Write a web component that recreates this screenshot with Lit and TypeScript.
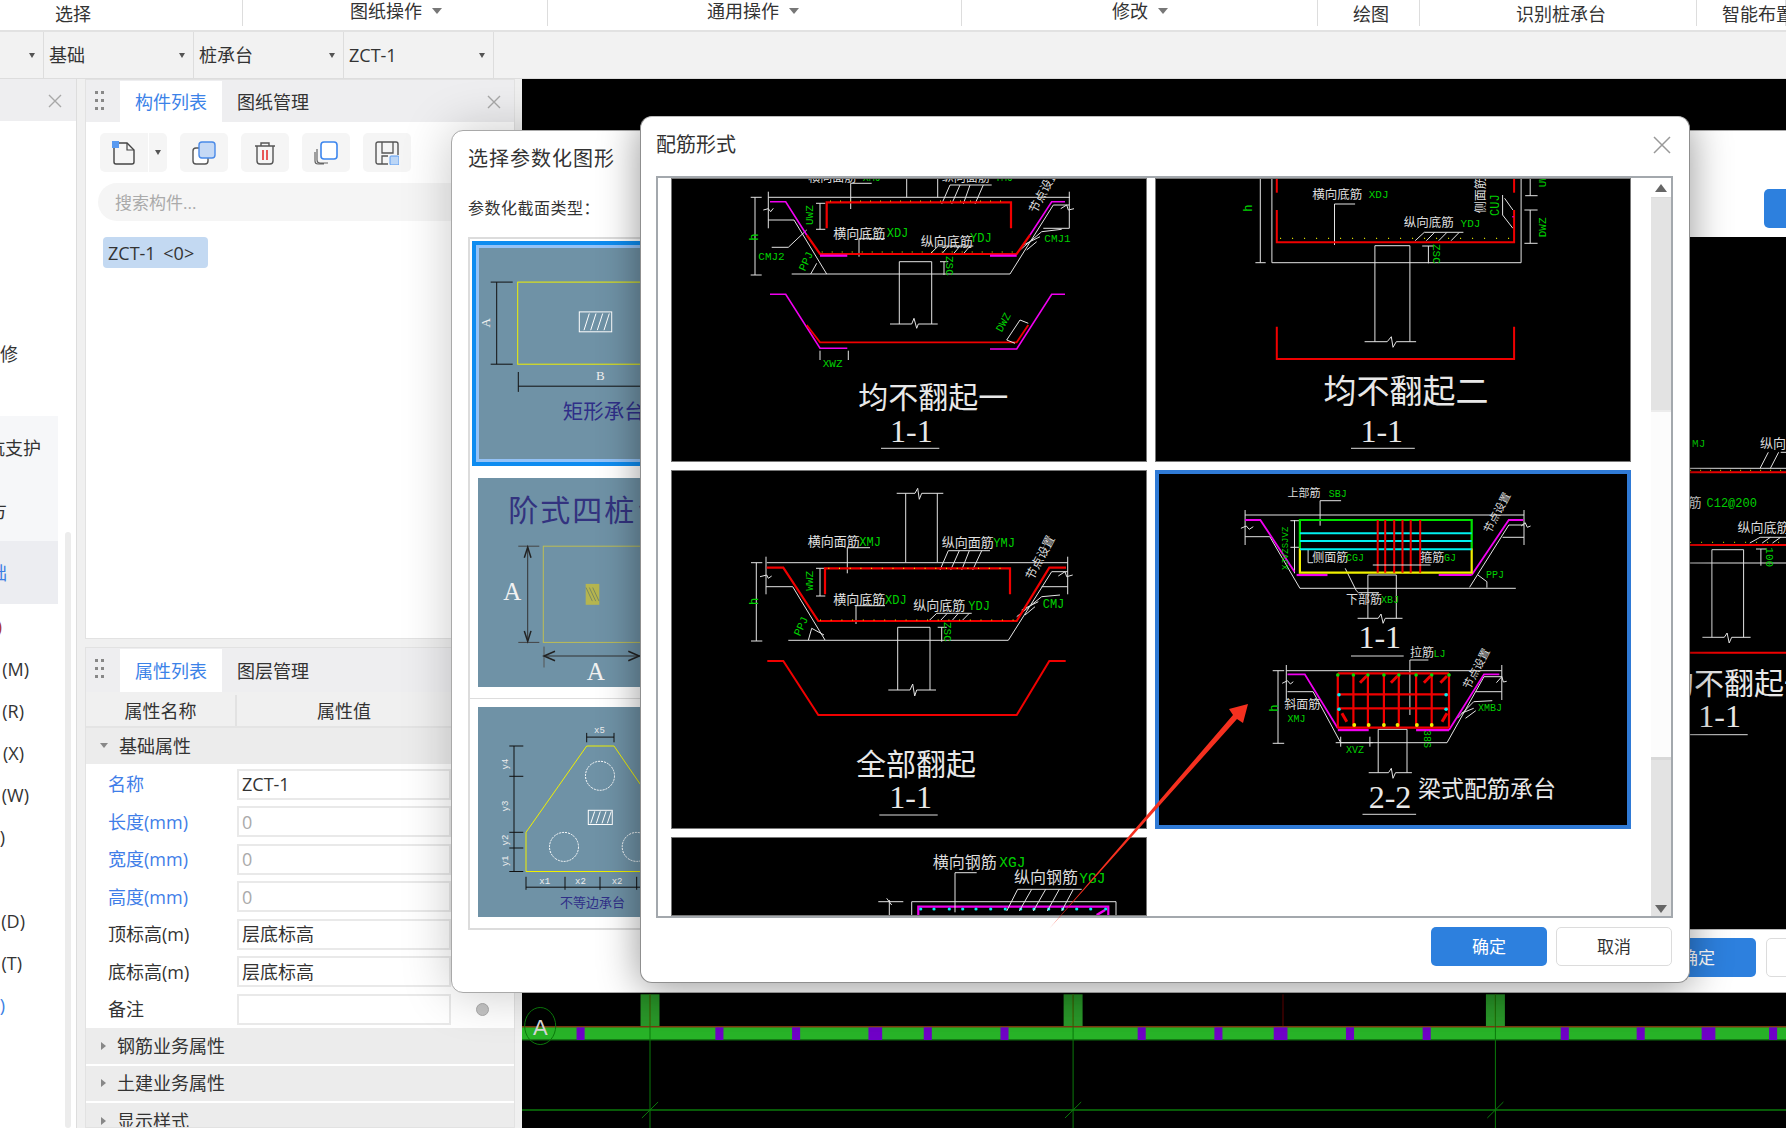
import { LitElement, html, css, svg } from "lit";
import { customElement } from "lit/decorators.js";

const mk = (ox: number, oy: number, sx: number, sy: number) => {
  const X = (v: number) => +(ox + v / sx).toFixed(1);
  const Y = (v: number) => +(oy + v / sy).toFixed(1);
  const pts = (p: number[]) => p.map((v, i) => (i % 2 ? Y(v) : X(v))).join(" ");
  return {
    l: (p: number[], c = "#e4e4e4", w = 1, dash = "") =>
      svg`<polyline points=${pts(p)} fill="none" stroke=${c} stroke-width=${w} stroke-dasharray=${dash}></polyline>`,
    t: (x: number, y: number, s: string, c = "#e0e0e0", size = 13, cls = "cj", rot = 0) =>
      svg`<text x=${X(x)} y=${Y(y)} fill=${c} font-size=${size} class=${cls} transform=${`rotate(${rot} ${X(x)} ${Y(y)})`}>${s}</text>`,
    g: (x: number, y: number, s: string, size = 11.5, rot = 0) =>
      svg`<text x=${X(x)} y=${Y(y)} fill="#00d000" font-size=${size} class="mn" transform=${`rotate(${rot} ${X(x)} ${Y(y)})`}>${s}</text>`,
    c: (x: number, y: number, r: number, f: string) => svg`<circle cx=${X(x)} cy=${Y(y)} r=${r} fill=${f}></circle>`,
    e: (x: number, y: number, r: number, ry: number, st: string, dash = "") =>
      svg`<ellipse cx=${X(x)} cy=${Y(y)} rx=${r} ry=${ry} fill="none" stroke=${st} stroke-dasharray=${dash}></ellipse>`,
    r: (x: number, y: number, x2: number, y2: number, st: string, f = "none", w = 1) =>
      svg`<rect x=${X(x)} y=${Y(y)} width=${X(x2) - X(x)} height=${Y(y2) - Y(y)} fill=${f} stroke=${st} stroke-width=${w}></rect>`,
  };
};
const RED = "#f00000";
const MG = "#f000f0";
const YL = "#f0f000";

function cell1() {
  const { l, t, g } = mk(640, 110, 3, 3);
  return svg`
    ${l([385, 262, 1290, 262])}${l([385, 245, 385, 355])}${l([1288, 245, 1288, 355])}
    ${l([370, 300, 385, 296, 392, 305, 400, 295])}${l([1262, 296, 1280, 285, 1285, 300, 1302, 296])}
    ${l([385, 330, 462, 330, 560, 492])}${l([455, 492, 1110, 492, 1240, 285, 1288, 285])}${l([1210, 355, 1288, 355])}
    ${l([800, 197, 800, 262])}${l([893, 197, 893, 262])}
    ${l([875, 642, 875, 455, 778, 455, 778, 642])}${l([750, 642, 815, 642, 822, 625, 830, 655, 835, 642, 893, 642])}
    ${l([345, 262, 345, 495])}${l([332, 262, 365, 262])}${l([332, 495, 365, 495])}
    ${l([540, 280, 540, 358])}${l([528, 280, 556, 280])}${l([528, 358, 556, 358])}
    ${l([512, 492, 530, 460])}${l([912, 455, 912, 495])}${l([900, 455, 925, 455])}
    ${l([632, 297, 632, 220, 695, 220])}${l([657, 440, 657, 386, 735, 386])}
    ${l([905, 282, 930, 225, 1055, 225])}${l([935, 282, 960, 225])}${l([970, 282, 990, 225])}${l([1005, 282, 1030, 225])}
    ${l([870, 432, 895, 408, 1000, 408])}${l([905, 432, 925, 408])}${l([940, 432, 960, 408])}${l([970, 432, 990, 408])}
    ${l([395, 412, 445, 412, 500, 360])}
    ${l([1140, 420, 1205, 365, 1265, 358])}${l([1150, 405, 1200, 380])}${l([1160, 420, 1190, 395])}
    ${l([560, 355, 560, 277, 1113, 277, 1113, 355], RED, 2.2)}
    ${l([500, 375, 540, 432, 1130, 432, 1170, 375], RED, 2.2)}
    ${l([570, 273, 1110, 273], YL, 1.2, "1 9")}${l([545, 426, 1130, 426], YL, 1.2, "1 9")}
    ${l([390, 275, 437, 275, 500, 375], MG, 1.6)}${l([540, 437, 622, 437], MG, 2.2)}${l([1050, 437, 1130, 437], MG, 2.2)}${l([1170, 375, 1235, 275, 1275, 275], MG, 1.6)}
    ${l([390, 553, 437, 553, 540, 715, 622, 715], MG, 1.6)}${l([1050, 717, 1130, 717, 1235, 553, 1275, 553], MG, 1.6)}
    ${l([500, 645, 540, 697, 1130, 697, 1165, 645], RED, 1.8)}
    ${l([540, 722, 540, 750])}${l([625, 722, 625, 750])}${l([1100, 690, 1140, 630])}${l([1140, 630, 1165, 640])}${l([1100, 690, 1125, 700])}
    ${t(505, 215, "横向面筋", "#ddd", 12)}${t(905, 215, "纵向面筋", "#ddd", 12)}${g(668, 213, "XMJ", 10)}${g(1065, 213, "YMJ", 10)}
    ${t(580, 383, "横向底筋")}${g(740, 381, "XDJ", 12)}${t(842, 407, "纵向底筋")}${g(990, 397, "YDJ", 12)}
    ${t(1188, 312, "节点设置", "#ddd", 12, "cj", -62)}
    ${g(518, 345, "UWZ", 11, -90)}${g(355, 392, "h", 12, -90)}${g(355, 450, "CMJ2", 11)}${g(1213, 397, "CMJ1", 11)}
    ${g(495, 485, "PPJ", 11, -65)}${g(918, 438, "ZSC", 11, 90)}${g(548, 772, "XWZ", 11)}${g(1085, 668, "DWZ", 11, -62)}
    ${t(655, 895, "均不翻起一", "#e8e8e8", 30)}
    ${t(750, 995, "1-1", "#e8e8e8", 32, "se")}${l([723, 1015, 898, 1015], "#ddd", 1)}
  `;
}

function cell2() {
  const { l, t, g, c } = mk(1140, 110, 2.427, 3);
  return svg`
    ${l([320, 197, 320, 458, 925, 458, 925, 197])}${l([292, 197, 292, 458])}${l([280, 458, 305, 458])}
    ${l([655, 695, 655, 407, 570, 407, 570, 695])}${l([545, 695, 600, 695, 610, 680, 614, 712, 622, 695, 670, 695])}
    ${l([472, 405, 472, 282, 522, 282])}
    ${l([668, 392, 690, 367, 785, 367])}${l([695, 392, 715, 367])}${l([725, 392, 745, 367])}${l([755, 392, 775, 367])}
    ${l([947, 300, 947, 400])}${l([933, 300, 965, 300])}${l([933, 400, 965, 400])}${l([947, 197, 947, 257])}${l([935, 257, 965, 257])}
    ${l([700, 408, 700, 460])}${l([685, 408, 712, 408])}
    ${l([880, 255, 880, 315, 905, 355])}${l([885, 265, 905, 300])}
    ${l([332, 197, 332, 248], RED, 2)}${l([908, 197, 908, 248], RED, 2)}
    ${l([332, 300, 332, 397, 908, 397, 908, 300], RED, 2)}
    ${l([340, 385, 905, 385], YL, 1.2, "1 11")}
    ${l([332, 650, 332, 747, 908, 747, 908, 650], RED, 2)}
    ${t(418, 267, "横向底筋", "#ddd", 12.5)}${g(555, 265, "XDJ", 11)}${t(640, 352, "纵向底筋", "#ddd", 12.5)}${g(778, 350, "YDJ", 11)}
    ${g(272, 305, "h", 12, -90)}${g(870, 318, "CUJ", 12, -90)}${t(838, 310, "侧面筋", "#ddd", 12, "cj", -90)}
    ${g(985, 232, "UW", 11, -90)}${g(985, 382, "DWZ", 11, -90)}${g(712, 402, "ZSC", 11, 90)}
    ${t(445, 880, "均不翻起二", "#e8e8e8", 33)}
    ${t(535, 995, "1-1", "#e8e8e8", 32, "se")}${l([512, 1015, 667, 1015], "#ddd", 1)}
    ${c(905, 320, 0.8, MG)}
  `;
}

function cell3() {
  const { l, t, g } = mk(640, 460, 3, 3);
  return svg`
    ${l([770, 100, 825, 100, 833, 85, 838, 118, 845, 100, 910, 100])}${l([797, 100, 797, 307])}${l([892, 100, 892, 307])}
    ${l([380, 308, 1283, 308])}${l([378, 290, 378, 403])}${l([1283, 290, 1283, 403])}
    ${l([360, 350, 380, 345, 385, 355, 395, 348])}${l([1255, 348, 1275, 335, 1280, 350, 1298, 345])}
    ${l([378, 380, 458, 380, 555, 540])}${l([445, 541, 1105, 541, 1235, 335, 1283, 335])}${l([1205, 380, 1283, 380])}
    ${l([349, 308, 349, 543])}${l([333, 308, 367, 308])}${l([333, 543, 367, 543])}
    ${l([540, 325, 540, 408])}${l([528, 325, 556, 325])}${l([528, 408, 556, 408])}
    ${l([505, 541, 515, 505, 552, 525])}
    ${l([870, 690, 870, 502, 773, 502, 773, 690])}${l([745, 690, 810, 690, 818, 672, 824, 708, 830, 690, 888, 690])}
    ${l([622, 340, 622, 263, 690, 263])}${l([648, 492, 648, 437, 735, 437])}
    ${l([900, 330, 925, 272, 1050, 272])}${l([932, 330, 958, 272])}${l([965, 330, 988, 272])}${l([998, 330, 1025, 272])}
    ${l([866, 483, 890, 460, 995, 460])}${l([900, 483, 922, 460])}${l([935, 483, 955, 460])}${l([965, 483, 988, 460])}
    ${l([905, 502, 905, 545])}${l([893, 502, 920, 502])}
    ${l([1130, 470, 1205, 410, 1260, 405])}${l([1145, 450, 1195, 425])}${l([1155, 465, 1185, 440])}
    ${l([555, 403, 555, 325, 1110, 325, 1110, 403], RED, 2.2)}
    ${l([380, 323, 430, 323, 535, 483, 1130, 483, 1228, 323, 1278, 323], RED, 2.2)}
    ${l([565, 325, 1105, 325], YL, 1.2, "1 9.7")}${l([540, 480, 1125, 480], YL, 1.2, "1 9.7")}
    ${l([382, 603, 430, 603, 535, 765, 1130, 765, 1228, 603, 1277, 603], RED, 2)}
    ${t(503, 258, "横向面筋")}${g(658, 257, "XMJ", 12)}${t(905, 262, "纵向面筋")}${g(1060, 260, "YMJ", 12)}
    ${t(580, 432, "横向底筋")}${g(735, 432, "XDJ", 12)}${t(820, 450, "纵向底筋")}${g(985, 450, "YDJ", 12)}
    ${t(1178, 362, "节点设置", "#ddd", 12, "cj", -62)}
    ${g(520, 392, "WWZ", 11, -90)}${g(355, 435, "h", 12, -90)}${g(1208, 445, "CMJ", 12)}
    ${g(480, 530, "PPJ", 11, -65)}${g(912, 486, "ZSC", 11, 90)}
    ${t(648, 945, "全部翻起", "#e8e8e8", 30)}
    ${t(748, 1045, "1-1", "#e8e8e8", 32, "se")}${l([718, 1065, 893, 1065], "#ddd", 1)}
  `;
}

function cell4() {
  const { l, t, g, c } = mk(1140, 460, 2.427, 3);
  const bars = [577, 595, 617, 637, 657, 680];
  const vs = [480, 518, 553, 592, 628, 670, 708, 750];
  return svg`
    ${l([255, 165, 932, 165])}${l([255, 150, 255, 255])}${l([932, 150, 932, 255])}
    ${l([245, 205, 258, 198, 265, 208, 275, 200])}${l([925, 198, 935, 188, 940, 202, 948, 198])}
    ${l([255, 230, 315, 230, 388, 385, 912, 385])}${l([800, 382, 895, 195, 932, 195])}${l([880, 232, 932, 232])}
    ${l([375, 180, 375, 340])}${l([365, 182, 388, 182])}${l([365, 262, 388, 262])}
    ${l([622, 475, 622, 345, 553, 345, 553, 475])}${l([528, 475, 578, 475, 585, 462, 590, 490, 595, 475, 637, 475])}
    ${l([820, 345, 842, 365, 842, 383])}
    ${l([437, 197, 437, 122, 488, 122])}${l([408, 270, 408, 308, 420, 308])}${l([498, 325, 525, 392, 530, 398, 580, 398])}
    ${l([255, 180, 292, 180, 375, 335], MG, 1.8)}${l([380, 345, 455, 345], MG, 2.2)}${l([725, 345, 805, 345], MG, 2.2)}${l([805, 345, 895, 180, 930, 180], MG, 1.8)}
    ${l([388, 265, 388, 180, 805, 180, 805, 265], "#00e000", 2.2)}
    ${l([388, 265, 388, 338, 805, 338, 805, 265], YL, 2.2)}
    ${l([388, 220, 805, 220], "#00f0f0", 2)}${l([388, 243, 805, 243], "#00f0f0", 2)}${l([388, 268, 805, 268], "#00f0f0", 2)}
    ${bars.map((x) => l([x, 180, x, 338], RED, 2))}
    ${l([565, 315, 705, 315])}
    ${t(358, 112, "上部筋", "#ddd", 11)}${g(458, 110, "SBJ", 10)}
    ${t(418, 305, "侧面筋", "#ddd", 12)}${g(500, 304, "CGJ", 10)}${t(680, 305, "箍筋", "#ddd", 12)}${g(738, 304, "GJ", 10)}
    ${g(840, 355, "PPJ", 10)}${t(500, 432, "下部筋", "#ddd", 12)}${g(585, 430, "XBJ", 10)}
    ${t(850, 222, "节点设置", "#ddd", 11, "cj", -62)}
    ${g(360, 265, "SJVZ", 9, -90)}${g(360, 330, "XJVZ", 9, -90)}
    ${t(530, 565, "1-1", "#e8e8e8", 32, "se")}${l([512, 588, 640, 588], "#ddd", 1)}

    ${l([355, 632, 878, 632])}${l([355, 615, 355, 720])}${l([878, 615, 878, 720])}
    ${l([335, 632, 335, 850])}${l([322, 632, 350, 632])}${l([322, 850, 350, 850])}
    ${l([345, 670, 358, 662, 365, 672, 372, 665])}${l([865, 668, 878, 650, 882, 666, 890, 664])}
    ${l([358, 695, 420, 695, 487, 848, 745, 848, 835, 650, 878, 650])}${l([815, 695, 878, 695])}
    ${l([475, 848, 565, 848])}${l([487, 830, 487, 860])}${l([558, 830, 558, 860])}
    ${l([648, 938, 648, 808, 578, 808, 578, 938])}${l([555, 938, 603, 938, 610, 925, 614, 955, 620, 938, 660, 938])}
    ${l([655, 600, 655, 765])}${l([655, 600, 700, 600])}
    ${l([770, 775, 810, 725, 855, 722])}${l([780, 760, 810, 745])}${l([790, 775, 815, 752])}
    ${l([358, 643, 400, 643, 480, 805], MG, 1.8)}${l([480, 810, 555, 810], MG, 2.4)}${l([670, 810, 750, 810], MG, 2.4)}${l([750, 810, 835, 643, 872, 643], MG, 1.8)}
    ${vs.map((x) => l([x, 640, x, 803], RED, 2.2))}
    ${[640, 703, 745, 803].map((y) => l([480, y, 750, y], RED, 2.2))}
    ${[518, 592, 670].map((x) => c(x, 645, 1.8, "#00e000"))}${[480, 553, 628, 708, 750].map((x) => c(x, 645, 1.8, "#00e000"))}
    ${[550, 625, 705, 745].map((x) => l([x, 648, x - 16, 668], RED, 3))}${[490, 745].map((x) => l([x, 760, x + (x < 500 ? 12 : -12), 785], RED, 3))}
    ${[483, 743].map((x) => c(x, 704, 1.8, "#00f0f0"))}${[483, 743].map((x) => c(x, 748, 1.8, "#00f0f0"))}
    ${[520, 555, 592, 625, 672, 708].map((x) => c(x, 795, 1.9, YL))}
    ${t(655, 590, "拉筋", "#ddd", 12)}${g(712, 590, "LJ", 10)}${t(350, 748, "斜面筋", "#ddd", 12)}
    ${g(358, 785, "XMJ", 10)}${g(820, 752, "XMBJ", 10)}${g(500, 878, "XVZ", 10)}
    ${g(335, 755, "h", 12, -90)}${g(690, 810, "38S", 10, 90)}${t(800, 690, "节点设置", "#ddd", 11, "cj", -62)}
    ${t(555, 1045, "2-2", "#e8e8e8", 32, "se")}${l([540, 1063, 670, 1063], "#ddd", 1)}
    ${t(675, 1010, "梁式配筋承台", "#e8e8e8", 23)}
  `;
}

function cell5() {
  const { l, t, g, c } = mk(860, 835, 3, 3);
  const dots = [182, 222, 268, 308, 348, 392, 436, 482, 522, 566, 608, 650, 692, 737];
  return svg`
    ${l([155, 248, 155, 200, 768, 200, 768, 248])}
    ${l([175, 248, 175, 215, 745, 215, 745, 248], MG, 2.2)}
    ${l([710, 240, 735, 225], MG, 2.6)}
    ${dots.map((x) => c(x, 222, 1.6, "#00f0f0"))}
    ${l([285, 232, 285, 113, 350, 113])}
    ${l([440, 228, 473, 163, 665, 163])}${l([478, 228, 515, 163])}${l([520, 228, 557, 163])}${l([562, 228, 598, 163])}${l([605, 228, 640, 163])}
    ${l([55, 200, 130, 200])}${l([88, 248, 88, 195])}${l([80, 190, 95, 210])}
    ${t(218, 98, "横向钢筋", "#ddd", 16)}${g(418, 95, "XGJ", 14.5)}
    ${t(462, 145, "纵向钢筋", "#ddd", 16)}${g(658, 145, "YGJ", 14.5)}
  `;
}

function backRight() {
  const a = mk(1140, 110, 2.427, 3);
  const b = mk(1140, 460, 2.427, 3);
  return svg`
    ${a.g(1340, 1015, "MJ", 11)}${a.t(1505, 1018, "纵向", "#ddd", 13)}
    ${a.l([1505, 1078, 1525, 1030])}${a.l([1530, 1078, 1550, 1030])}${a.l([1555, 1030, 1568, 1030])}
    ${a.l([1335, 1078, 1568, 1078])}${b.l([1335, 40, 1900, 40], RED, 2)}${b.l([1335, 34, 1900, 34], YL, 1, "1 9")}
    ${b.t(1300, 145, "底筋", "#ddd", 13)}${b.g(1375, 143, "C12@200", 12)}
    ${b.t(1450, 218, "纵向底筋", "#ddd", 13)}
    ${b.l([1480, 252, 1505, 235, 1568, 235])}${b.l([1510, 252, 1530, 235])}${b.l([1535, 252, 1555, 235])}
    ${b.l([1335, 258, 1900, 258], RED, 2)}${b.l([1335, 250, 1900, 250], YL, 1, "1 10")}
    ${b.l([1335, 312, 1900, 312])}
    ${b.l([1465, 535, 1465, 272, 1388, 272, 1388, 535])}${b.l([1365, 535, 1418, 535, 1425, 522, 1430, 552, 1436, 535, 1482, 535])}
    ${b.l([1507, 270, 1507, 320])}${b.l([1495, 270, 1520, 270])}
    ${b.g(1520, 265, "100", 11, 90)}
    ${b.l([1335, 581, 1900, 581], RED, 2)}
    ${b.t(1272, 705, "均不翻起一", "#e8e8e8", 30)}
    ${b.t(1355, 805, "1-1", "#e8e8e8", 32, "se")}${b.l([1335, 827, 1475, 827], "#ddd", 1)}
  `;
}

function card1() {
  const { l, t, r } = mk(440, 120, 3, 1.912);
  return svg`
    ${l([170, 308, 170, 465], "#111")}${l([152, 308, 218, 308], "#111")}${l([152, 465, 218, 465], "#111")}
    ${t(150, 395, "A", "#f0f0f0", 13, "se", -90)}
    ${r(233, 308, 800, 465, YL)}
    ${r(418, 365, 515, 403, "#fff")}
    ${[440, 460, 480, 500].map((x) => l([x - 8, 400, x + 8, 368], "#fff"))}
    ${t(468, 495, "B", "#f0f0f0", 13, "se")}
    ${l([235, 507, 800, 507], "#111")}${l([235, 480, 235, 518], "#111")}
    ${t(368, 570, "矩形承台", "#2f2f88", 20.5)}
  `;
}
function card2() {
  const { l, t, r } = mk(440, 120, 3, 1.912);
  return svg`
    ${t(205, 765, "阶式四桩台", "#33337f", 30, "cj ls")}
    ${r(310, 813, 800, 997, "#bdbd55")}
    ${r(437, 885, 478, 925, "none", "#b5b54f")}
    ${[448, 458, 468].map((x) => l([x - 10, 892, x + 9, 918], "#7c8a5f"))}
    ${l([263, 815, 263, 995], "#333")}${l([235, 813, 298, 813], "#444")}${l([235, 997, 298, 997], "#444")}
    ${l([253, 835, 263, 815, 273, 835], "#222", 1.5)}${l([253, 975, 263, 995, 273, 975], "#222", 1.5)}
    ${t(190, 915, "A", "#f2f2f2", 25, "se")}
    ${l([312, 1023, 800, 1023], "#333")}${l([312, 1005, 312, 1045], "#555")}
    ${l([345, 1014, 312, 1023, 345, 1032], "#222", 1.5)}${l([565, 1014, 598, 1023, 565, 1032], "#222", 1.5)}
    ${t(440, 1068, "A", "#f2f2f2", 25, "se")}
  `;
}
function card3() {
  const { l, t, r, e } = mk(440, 120, 3, 1.912);
  return svg`
    ${l([800, 1435, 258, 1435, 258, 1360, 440, 1195, 522, 1195, 700, 1360], YL)}
    ${e(480, 1252, 14.5, 14.5, "#fff", "2 1")}${e(372, 1388, 14.5, 14.5, "#fff", "2 1")}${e(590, 1388, 14.5, 14.5, "#fff", "2 1")}
    ${r(445, 1318, 517, 1345, "#fff")}
    ${[460, 477, 494, 510].map((x) => l([x - 8, 1343, x + 4, 1320], "#fff"))}
    ${l([222, 1195, 222, 1435], "#111")}
    ${[1195, 1253, 1360, 1390, 1435].map((y) => l([208, y, 250, y], "#111"))}
    ${t(205, 1240, "y4", "#eee", 9, "mn", -90)}${t(205, 1320, "y3", "#eee", 9, "mn", -90)}${t(205, 1385, "y2", "#eee", 9, "mn", -90)}${t(205, 1425, "y1", "#eee", 9, "mn", -90)}
    ${l([440, 1178, 522, 1178], "#111")}${l([440, 1170, 440, 1188], "#111")}${l([522, 1170, 522, 1188], "#111")}
    ${t(462, 1170, "x5", "#eee", 9, "mn")}
    ${l([258, 1465, 800, 1465], "#111")}
    ${[258, 375, 480, 590].map((x) => l([x, 1445, x, 1470], "#111"))}
    ${t(298, 1458, "x1", "#eee", 9, "mn")}${t(405, 1458, "x2", "#eee", 9, "mn")}${t(515, 1458, "x2", "#eee", 9, "mn")}
    ${t(360, 1502, "不等边承台", "#2f2f88", 13)}
  `;
}

function canvasArt() {
  const { l, t, e } = mk(520, 900, 1.2385, 3);
  const purple: [number, number][] = [[75, 10], [247, 10], [342, 10], [440, 17], [505, 10], [600, 10], [770, 10], [865, 10], [942, 17], [1028, 10], [1123, 10], [1294, 10], [1388, 10], [1472, 17], [1552, 10]];
  const stems = [161, 685, 1208];
  return svg`
    ${stems.map((x) => svg`${l([x, 283, x, 378], "#2a9a2a", 19)}${l([x, 283, x, 378], "#a05010", 1)}`)}
    ${l([945, 283, 945, 378], "#6a0000", 1)}
    ${l([0, 400, 1568, 400], "#28b428", 13)}
    ${l([0, 380, 1568, 380], "#7a3a10", 1.5)}
    ${l([0, 420, 1568, 420], "#0f6a0f", 1)}
    ${purple.map(([x, w]) => l([x, 382, x, 420], "#7000c8", w / 1.2385))}
    ${stems.map((x) => l([x, 283, x, 684], "#0b7a0b", 1))}
    ${l([0, 630, 1568, 630], "#0b7a0b", 1.4)}
    ${stems.map((x) => l([x - 10, 654, x + 10, 606], "#0b7a0b", 1))}
    ${e(25, 378, 15.5, 18.5, "#0b7a0b")}
    ${t(16, 405, "A", "#d8d8d8", 22, "ar")}
  `;
}

const gripIcon = html`<svg class="grip" width="9" height="20" viewBox="0 0 9 20">
  ${[0, 8, 16].map((y) => svg`<rect x="0" y=${y} width="3" height="3" fill="#888"></rect><rect x="6" y=${y} width="3" height="3" fill="#888"></rect>`)}
</svg>`;
const closeIcon = html`<svg width="14" height="14" viewBox="0 0 14 14"><path d="M1 1L13 13M13 1L1 13" stroke="#a8a8a8" stroke-width="1.4" fill="none"></path></svg>`;
const closeIconLarge = html`<svg width="18" height="18" viewBox="0 0 18 18"><path d="M1 1L17 17M17 1L1 17" stroke="#999" stroke-width="1.5" fill="none"></path></svg>`;

const ribbon = [
  { w: 243, p: 55, t: "选择", lo: 1 },
  { w: 305, p: 107, t: "图纸操作", c: 1 },
  { w: 414, p: 159, t: "通用操作", c: 1 },
  { w: 356, p: 150, t: "修改", c: 1 },
  { w: 102, p: 35, t: "绘图", lo: 1 },
  { w: 277, p: 96, t: "识别桩承台", lo: 1 },
  { w: 89, p: 25, t: "智能布置", lo: 1 },
];
const leftItems: { h: number; end: number; t: string; c?: string }[] = [
  { h: 42, end: 18, t: "修" },
  { h: 41, end: 2, t: "" },
  { h: 64, end: 41, t: "坑支护", c: "hi" },
  { h: 61, end: 7, t: "方", c: "hi" },
  { h: 63, end: 7, t: "础", c: "act" },
  { h: 44, end: 2, t: ")", c: "rd" },
  { h: 42, end: 29, t: "(M)" },
  { h: 42, end: 24, t: "(R)" },
  { h: 42, end: 24, t: "(X)" },
  { h: 42, end: 29, t: "(W)" },
  { h: 42, end: 5, t: ")" },
  { h: 42, end: 0, t: "" },
  { h: 42, end: 25, t: "(D)" },
  { h: 42, end: 22, t: "(T)" },
  { h: 42, end: 5, t: ")", c: "bl" },
];
const props = [
  { n: "名称", v: "ZCT-1", b: 1 },
  { n: "长度(mm)", v: "0", b: 1, g: 1 },
  { n: "宽度(mm)", v: "0", b: 1, g: 1 },
  { n: "高度(mm)", v: "0", b: 1, g: 1 },
  { n: "顶标高(m)", v: "层底标高" },
  { n: "底标高(m)", v: "层底标高" },
  { n: "备注", v: "", dot: 1 },
];

@customElement("app-root")
export class AppRoot extends LitElement {
  static styles = css`
    :host { display: block; width: 1786px; height: 1128px; overflow: hidden; position: relative; background: #f0f0f0; color: #333;
      font-family: "Open Sans", "Noto Sans CJK SC", sans-serif; font-size: 18px; line-height: 1; }
    .cj { font-family: "Noto Sans CJK SC", sans-serif; font-weight: 400; }
    .ls { letter-spacing: 2px; }
    .mn { font-family: "Liberation Mono", monospace; }
    .se { font-family: "Liberation Serif", serif; }
    .ar { font-family: "Liberation Sans", sans-serif; }
    text { white-space: pre; }
    svg { display: block; }

    .ribbon { display: flex; height: 30px; background: #fff; border-bottom: 2px solid #e2e2e2; overflow: hidden; }
    .sec { box-sizing: border-box; height: 26px; border-right: 1px solid #ddd; display: flex; align-items: center; gap: 10px; white-space: nowrap; flex: none; padding-bottom: 4px; }
    .sec.lo { padding-bottom: 0; padding-top: 2px; }
    .tri { width: 0; height: 0; border-left: 5px solid transparent; border-right: 5px solid transparent; border-top: 6px solid #777; }
    .tri.s { border-left-width: 3px; border-right-width: 3px; border-top: 5px solid #555; }

    .toolbar { display: flex; height: 47px; background: #f2f2f2; box-sizing: border-box; border-bottom: 1px solid #ddd; }
    .pick { box-sizing: border-box; width: 150px; display: flex; align-items: center; justify-content: space-between; padding: 0 8px 0 5px; border-right: 1px solid #ddd; }
    .pick.first { width: 44px; justify-content: flex-end; }

    .body { display: flex; height: 1049px; }
    .left { width: 77px; flex: none; margin-right: 8px; background: #fff; border-right: 1px solid #ddd; box-sizing: border-box; position: relative; overflow: hidden; }
    .head { display: flex; align-items: stretch; height: 42px; background: #eeeef0; box-sizing: border-box; padding-top: 1px; }
    .head.tall { height: 44px; }
    .lefthead { justify-content: flex-end; align-items: center; padding-right: 14px; }
    .list { padding-top: 212px; width: 58px; }
    .li { display: flex; align-items: center; justify-content: flex-end; overflow: hidden; white-space: nowrap; }
    .li.hi { background: #f6f7f9; }
    .li.act { background: #ecedf1; color: #3b7fe4; }
    .li.bl { color: #3b7fe4; }
    .li.rd { color: #a33; }
    .lscroll { position: absolute; left: 65px; top: 453px; bottom: 0; width: 6px; background: #ececec; border-radius: 3px; }

    .mid { width: 430px; flex: none; margin-right: 7px; display: flex; flex-direction: column; gap: 8px; }
    .panel { background: #fff; border: 1px solid #e2e2e2; box-sizing: border-box; }
    .pa { height: 560px; }
    .pb { flex: 1; overflow: hidden; }
    .grip { margin: 10px 16px 0 9px; flex: none; }
    .tab { display: flex; align-items: center; padding: 0 15px; }
    .tab.on { background: #fff; color: #3b82e8; }
    .spacer { flex: 1; }
    .x { align-self: center; margin-right: 13px; }
    .tools { display: flex; gap: 13px; padding: 11px 0 0 14px; }
    .btn { height: 39px; width: 48px; background: #f5f5f5; border-radius: 5px; display: flex; align-items: center; justify-content: center; }
    .split { display: flex; gap: 1px; }
    .split .btn:first-child { border-radius: 5px 0 0 5px; }
    .split .car { width: 18px; border-radius: 0 5px 5px 0; }
    .search { margin: 11px 0 0 12px; height: 38px; border-radius: 19px; background: #f5f5f5; color: #aaa; padding-left: 17px; display: flex; align-items: center; font-size: 17px; }
    .chip { margin: 16px 0 0 17px; display: inline-flex; align-items: center; height: 31px; padding: 0 5px; width: 105px; box-sizing: border-box; background: #c3d9f2; border-radius: 4px; white-space: pre; word-spacing: 3px; }

    .tbl-h { display: grid; grid-template-columns: 151px 214px 1fr; height: 36px; background: #f0f0f0; border-bottom: 2px solid #e4e4e4; box-sizing: border-box; padding-top: 3px; }
    .tbl-h div { display: flex; align-items: center; justify-content: center; }
    .tbl-h div:first-child { border-right: 2px solid #e2e2e2; }
    .group { display: flex; align-items: center; height: 37.5px; box-sizing: border-box; background: #ececec; border-bottom: 2px solid #fff; padding-left: 14px; gap: 11px; }
    .group .tri-r { width: 0; height: 0; border-top: 4px solid transparent; border-bottom: 4px solid transparent; border-left: 5px solid #888; margin-left: 1px; }
    .group .tri-d { width: 0; height: 0; border-left: 4px solid transparent; border-right: 4px solid transparent; border-top: 5px solid #888; }
    .row { display: grid; grid-template-columns: 151px 214px 1fr; height: 37.5px; align-items: center; }
    .row .n { padding-left: 22px; }
    .row .n.hl { color: #3f7ee8; }
    .row .v { height: 31px; box-sizing: border-box; border: 2px solid #e9e9e9; display: flex; align-items: center; padding-left: 3px; }
    .row .v.g { color: #aaa; }
    .dot { width: 11px; height: 11px; border-radius: 50%; background: #c4c4c4; border: 1px solid #aaa; justify-self: center; }

    .canvas { flex: 1; background: #000; min-width: 0; }

    .dlg { position: absolute; background: #fff; border-radius: 12px; box-sizing: border-box; }
    .back { left: 451px; top: 130px; width: 1449px; height: 863px; border: 1px solid #a9a9a9; box-shadow: 0 0 50px rgba(0, 0, 0, 0.22); display: flex; flex-direction: column; overflow: hidden; }
    .bhead { height: 106px; box-sizing: border-box; padding: 16px 0 0 16px; position: relative; flex: none; }
    .btitle { font-size: 20px; letter-spacing: 1px; line-height: 24px; }
    .blabel { font-size: 16px; letter-spacing: 0.5px; margin-top: 27px; line-height: 20px; }
    .bbtn { position: absolute; left: 1312px; top: 58px; width: 116px; height: 39px; background: #2d80de; border-radius: 5px; }
    .bbody { flex: 1; display: flex; justify-content: space-between; min-height: 0; }
    .clist { margin-left: 16px; width: 400px; border: 2px solid #dcdcdc; box-sizing: border-box; }
    .card { padding: 2px 0 0 2px; }
    .cardsel { border: 4px solid #0e8cf0; }
    .cardsel svg { border: 3px solid #93c2f7; background: #6f92a6; }
    .c2 { padding: 12px 0 11px 8px; border-bottom: 1px solid #ddd; }
    .c3 { padding: 8px 0 0 8px; }
    .c2 svg, .c3 svg { background: #6f92a6; }
    .bright { width: 209px; background: #000; flex: none; border-bottom: 1px solid #bbb; box-sizing: border-box; overflow: hidden; }
    .bfoot { height: 62px; box-sizing: border-box; flex: none; padding: 8px 0 0 1188px; display: flex; gap: 10px; }

    .main { left: 640px; top: 116px; width: 1050px; height: 867px; border: 1px solid #8f8f8f; border-top-color: #bbb; box-shadow: 0 4px 40px rgba(0, 0, 0, 0.42); display: flex; flex-direction: column; }
    .mhead { height: 59px; flex: none; display: flex; justify-content: space-between; align-items: center; padding: 0 18px 3px 15px; box-sizing: border-box; }
    .mtitle { font-size: 20px; }
    .mlist { height: 742px; flex: none; margin: 0 16px 0 15px; border: 2px solid #a3a8ad; box-sizing: border-box; display: flex; overflow: hidden; }
    .grid { flex: 1; min-width: 0; overflow: hidden; padding-left: 13px; display: grid; grid-template-columns: 476px 476px; column-gap: 8px; row-gap: 8px; grid-template-rows: 284px 359px 1fr; align-content: start; }
    .cell { background: #000; overflow: hidden; outline: 1px solid #777; outline-offset: -1px; }
    .cell.picked { outline: 4px solid #2f7ad6; outline-offset: -4px; }
    .sb { width: 20px; flex: none; display: flex; flex-direction: column; background: #e3e3e3; }
    .sb-b { height: 20px; background: #fff; display: flex; align-items: center; justify-content: center; border-bottom: 1px solid #ddd; box-sizing: border-box; }
    .sb-d { height: 14px; background: #e3e3e3; display: flex; align-items: center; justify-content: center; }
    .sb-a { height: 212px; }
    .sb-t { height: 350px; background: #fcfcfc; border-top: 2px solid #ececec; border-bottom: 3px solid #d8d8d8; box-sizing: border-box; }
    .sb-c { flex: 1; }
    .up { width: 0; height: 0; border-left: 6px solid transparent; border-right: 6px solid transparent; border-bottom: 8px solid #666; }
    .down { width: 0; height: 0; border-left: 6px solid transparent; border-right: 6px solid transparent; border-top: 8px solid #666; }
    .mfoot { flex: 1; display: flex; justify-content: flex-end; gap: 9px; padding: 9px 17px 0 0; align-items: flex-start; }
    .dbtn { width: 116px; height: 39px; border-radius: 5px; display: flex; align-items: center; justify-content: center; font-size: 17px; box-sizing: border-box; flex: none; }
    .dbtn.p { background: #2d80de; color: #fff; }
    .dbtn.s { background: #fff; border: 1.5px solid #dcdcdc; }
    .arrow { position: absolute; left: 0; top: 0; pointer-events: none; }
  `;

  private toolIcons() {
    return [
      html`<svg width="24" height="24" viewBox="0 0 24 24"><path d="M2 2H15L22 9V21a2 2 0 0 1-2 2H4a2 2 0 0 1-2-2Z" fill="none" stroke="#444" stroke-width="1.4"></path><path d="M15 2V9H22" fill="none" stroke="#444" stroke-width="1.2"></path><rect x="0" y="0" width="7" height="7" fill="#5a9af0"></rect></svg>`,
      html`<svg width="24" height="24" viewBox="0 0 24 24"><rect x="1" y="7" width="15" height="16" rx="3" fill="#fff" stroke="#555" stroke-width="1.4"></rect><rect x="7" y="1" width="16" height="16" rx="3" fill="#c5d9f5" stroke="#4a8ae8" stroke-width="1.4"></rect></svg>`,
      html`<svg width="24" height="24" viewBox="0 0 24 24"><path d="M2 5H22M8 5V2H16V5M4 5V20a3 3 0 0 0 3 3H17a3 3 0 0 0 3-3V5" fill="none" stroke="#555" stroke-width="1.4"></path><path d="M10 9V19M14 9V19" stroke="#e53030" stroke-width="1.6"></path></svg>`,
      html`<svg width="24" height="24" viewBox="0 0 24 24"><path d="M3 8V19a3 3 0 0 0 3 3H14M1 11V20a3 3 0 0 0 3 3H10" fill="none" stroke="#666" stroke-width="1.2"></path><rect x="7" y="1" width="16" height="17" rx="3" fill="#fff" stroke="#3d86ee" stroke-width="1.6"></rect></svg>`,
      html`<svg width="24" height="24" viewBox="0 0 24 24"><path d="M13 23H3a2 2 0 0 1-2-2V3a2 2 0 0 1 2-2H21a2 2 0 0 1 2 2V14" fill="none" stroke="#555" stroke-width="1.4"></path><path d="M7 1V12H18V1M7 23V15H13" fill="none" stroke="#555" stroke-width="1.3"></path><rect x="15" y="15" width="9" height="9" rx="1" fill="#bcd6f6" stroke="#5a9af0"></rect></svg>`,
    ];
  }

  render() {
    const icons = this.toolIcons();
    return html`
      <div class="ribbon">
        ${ribbon.map((r) => html`<div class="sec ${r.lo ? "lo" : ""}" style=${`width:${r.w}px;padding-left:${r.p}px`}>${r.t}${r.c ? html`<span class="tri"></span>` : ""}</div>`)}
      </div>
      <div class="toolbar">
        <div class="pick first"><span class="tri s"></span></div>
        <div class="pick">基础<span class="tri s"></span></div>
        <div class="pick">桩承台<span class="tri s"></span></div>
        <div class="pick">ZCT-1<span class="tri s"></span></div>
      </div>
      <div class="body">
        <aside class="left">
          <div class="head lefthead">${closeIcon}</div>
          <div class="list">
            ${leftItems.map((i) => html`<div class="li ${i.c ?? ""}" style=${`height:${i.h}px;padding-right:${58 - i.end}px`}>${i.t}</div>`)}
          </div>
          <div class="lscroll"></div>
        </aside>
        <section class="mid">
          <div class="panel pa">
            <div class="head">${gripIcon}<div class="tab on">构件列表</div><div class="tab">图纸管理</div><div class="spacer"></div><div class="x">${closeIcon}</div></div>
            <div class="tools">
              <div class="split"><div class="btn">${icons[0]}</div><div class="btn car"><span class="tri s"></span></div></div>
              <div class="btn">${icons[1]}</div><div class="btn">${icons[2]}</div><div class="btn">${icons[3]}</div><div class="btn">${icons[4]}</div>
            </div>
            <div class="search">搜索构件...</div>
            <div class="chip">ZCT-1 &lt;0&gt;</div>
          </div>
          <div class="panel pb">
            <div class="head tall">${gripIcon}<div class="tab on">属性列表</div><div class="tab">图层管理</div></div>
            <div class="tbl-h"><div>属性名称</div><div>属性值</div><div></div></div>
            <div class="group"><span class="tri-d"></span><span>基础属性</span></div>
            ${props.map((p) => html`<div class="row"><div class="n ${p.b ? "hl" : ""}">${p.n}</div><div class="v ${p.g ? "g" : ""}">${p.v}</div>${p.dot ? html`<div class="dot"></div>` : ""}</div>`)}
            ${["钢筋业务属性", "土建业务属性", "显示样式"].map((g) => html`<div class="group"><span class="tri-r"></span><span>${g}</span></div>`)}
          </div>
        </section>
        <div class="canvas"><svg width="1264" height="1049" viewBox="522 79 1264 1049">${canvasArt()}</svg></div>
      </div>

      <div class="dlg back">
        <div class="bhead">
          <div class="btitle">选择参数化图形</div>
          <div class="blabel">参数化截面类型：</div>
          <div class="bbtn"></div>
        </div>
        <div class="bbody">
          <div class="clist">
            <div class="card"><div class="cardsel"><svg width="390" height="211" viewBox="479 247 390 211">${card1()}</svg></div></div>
            <div class="c2"><svg width="390" height="209" viewBox="478 477 390 209">${card2()}</svg></div>
            <div class="c3"><svg width="390" height="210" viewBox="478 706 390 210">${card3()}</svg></div>
          </div>
          <div class="bright"><svg width="209" height="692" viewBox="1690 238 209 692">${backRight()}</svg></div>
        </div>
        <div class="bfoot"><div class="dbtn p">确定</div><div class="dbtn s">取消</div></div>
      </div>

      <div class="dlg main">
        <div class="mhead"><div class="mtitle">配筋形式</div>${closeIconLarge}</div>
        <div class="mlist">
          <div class="grid">
            <div class="cell"><svg width="476" height="284" viewBox="671 178 476 284">${cell1()}</svg></div>
            <div class="cell"><svg width="476" height="284" viewBox="1155 178 476 284">${cell2()}</svg></div>
            <div class="cell"><svg width="476" height="359" viewBox="671 470 476 359">${cell3()}</svg></div>
            <div class="cell picked"><svg width="476" height="359" viewBox="1155 470 476 359">${cell4()}</svg></div>
            <div class="cell"><svg width="476" height="81" viewBox="671 837 476 81">${cell5()}</svg></div>
          </div>
          <div class="sb">
            <div class="sb-b"><span class="up"></span></div>
            <div class="sb-a"></div>
            <div class="sb-t"></div>
            <div class="sb-c"></div>
            <div class="sb-d"><span class="down"></span></div>
          </div>
        </div>
        <div class="mfoot"><div class="dbtn p">确定</div><div class="dbtn s">取消</div></div>
      </div>

      <svg class="arrow" width="1786" height="1128" viewBox="0 0 1786 1128">
        <polygon points="1248,704 1229,709 1233,715 1049,929 1237,719 1243,723" fill="#f5301f"></polygon>
      </svg>
    `;
  }
}
